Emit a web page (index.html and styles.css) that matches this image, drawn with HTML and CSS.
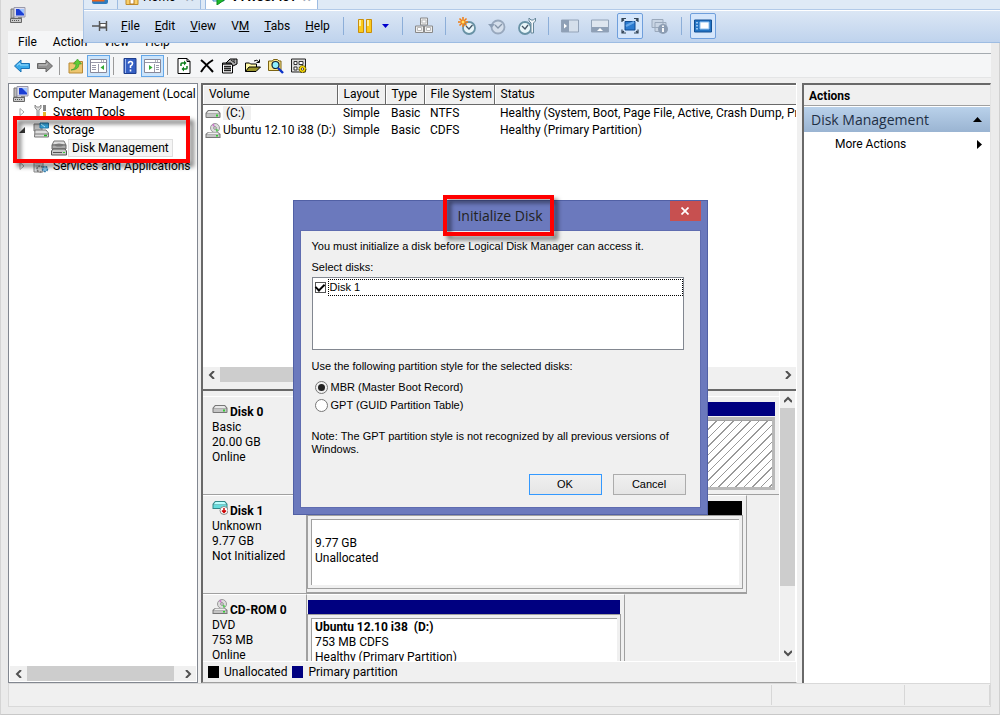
FILE: index.html
```html
<!DOCTYPE html>
<html lang="en">
<head>
    <meta charset="UTF-8">
    <meta name="viewport" content="width=device-width, initial-scale=1.0">
    <title>Computer Management</title>
    <link rel="stylesheet" href="styles.css">
</head>
<body>
    <!-- shared icons -->
    <svg class="defs" width="0" height="0" aria-hidden="true">
        <symbol id="drive" viewBox="0 0 16 16">
            <path d="M3 4h10l2.500 3v4q0 1-1 1h-13q-1 0-1-1V7z" fill="#777"/>
            <path d="M3.500 5h9l2 2.500h-13z" fill="#e8e8e8"/>
            <path d="M1.500 8h13v3h-13z" fill="#c4c4c4"/>
            <path d="M11 8.500h2v2h-2z" fill="#3c3"/>
        </symbol>
        <symbol id="cdrom" viewBox="0 0 16 16">
            <circle cx="10" cy="5" r="4.500" fill="#ddd" stroke="#999"/>
            <path d="M10 5L7 2l2-1.500z" fill="#c7c"/>
            <path d="M10 5l3.500 2-2 2z" fill="#5c5"/>
            <circle cx="10" cy="5" r="1.300" fill="#fff" stroke="#888"/>
            <path d="M3 9h10l2.500 2v4h-15v-4z" fill="#777"/>
            <path d="M3.500 9.500h9l2 2h-13z" fill="#eee"/>
            <path d="M1.500 12h13v2h-13z" fill="#c4c4c4"/>
            <path d="M11 12h2v1.500h-2z" fill="#3c3"/>
        </symbol>
        <symbol id="computer" viewBox="0 0 16 16">
            <path d="M1 2h3v9H1z" fill="#bbb" stroke="#777"/>
            <path d="M4 .5h11v9.500H4z" fill="#dde" stroke="#99a"/>
            <path d="M6 2h8v6.500H6z" fill="#1c3fd4"/>
            <path d="M9 2h5v5z" fill="#9fc4ff"/>
            <path d="M8 10h4v2H8z" fill="#888"/>
            <path d="M.5 11.500h11v4H.5z" fill="#c8c8c8" stroke="#666"/>
            <path d="M2 13.500h8" stroke="#555" stroke-dasharray="1 1"/>
        </symbol>
        <symbol id="left" viewBox="0 0 8 8"><path d="M6 0L2 4l4 4" fill="none" stroke="#505050" stroke-width="2"/></symbol>
        <symbol id="right" viewBox="0 0 8 8"><path d="M2 0l4 4-4 4" fill="none" stroke="#505050" stroke-width="2"/></symbol>
        <symbol id="up" viewBox="0 0 8 8"><path d="M0 6l4-4 4 4" fill="none" stroke="#505050" stroke-width="2"/></symbol>
        <symbol id="down" viewBox="0 0 8 8"><path d="M0 2l4 4 4-4" fill="none" stroke="#505050" stroke-width="2"/></symbol>
    </svg>

    <div class="window">
        <div class="titlebar"><svg class="icon"><use href="#computer"/></svg></div>

        <nav class="menubar">
            <a href="#">File</a><a href="#">Action</a><a href="#">View</a><a href="#">Help</a>
        </nav>

        <div class="toolbar">
            <button aria-label="Back"><svg class="icon" viewBox="0 0 16 16"><path d="M.5 8L7 2v3.500h8.500v5H7V14z" fill="#39a9ea" stroke="#1871b5"/><path d="M3 7.500L6 5v2h8" fill="none" stroke="#9bdcfb"/></svg></button>
            <button aria-label="Forward"><svg class="icon" viewBox="0 0 16 16"><path d="M15.500 8L9 2v3.500H.5v5H9V14z" fill="#919191" stroke="#666"/><path d="M2 7h8V5" fill="none" stroke="#c4c4c4"/></svg></button>
            <span class="sep"></span>
            <button aria-label="Up one level"><svg class="icon" viewBox="0 0 16 16"><path d="M1 5h5l1-1.500h7.500V15H1z" fill="#edc670" stroke="#b98a35"/><path d="M3 12q5-1 5-6H5.500L9.500 1l4 5H11q0 6-8 6z" fill="#5ecb37" stroke="#35962a" stroke-width=".6"/></svg></button>
            <button class="on" aria-label="Show console tree"><svg class="panel-icon" viewBox="0 0 17 14"><path d="M.5.5h16v13H.5z" fill="#fff" stroke="#889"/><path d="M1 3.500h15M8.500 5v8M2 6.500h4M2 8.500h4M2 10.500h4" stroke="#99a"/><path d="M14 6v5l-3.500-2.500z" fill="#3a3"/><path d="M11 2h4" stroke="#667" stroke-dasharray="1 1"/></svg></button>
            <span class="sep"></span>
            <button aria-label="Help"><svg class="icon" viewBox="0 0 16 16"><path d="M2 .5h12v15H2z" fill="#345fc3" stroke="#1d3d8d"/><path d="M3.500 1v14" stroke="#9db7ee"/><path d="M6.500 5.500q0-2 2-2t2 2q0 1.500-2 2.500v2M8.500 11.500v2" fill="none" stroke="#fff" stroke-width="1.600"/></svg></button>
            <button class="on" aria-label="Show action pane"><svg class="panel-icon" viewBox="0 0 17 14"><path d="M.5.5h16v13H.5z" fill="#fff" stroke="#889"/><path d="M1 3.500h15M10.500 5v8M12 6.500h3M12 8.500h3M12 10.500h3" stroke="#99a"/><path d="M5 6v5l3.500-2.500z" fill="#3a3"/><path d="M11 2h4" stroke="#667" stroke-dasharray="1 1"/></svg></button>
            <span class="sep"></span>
            <button aria-label="Refresh"><svg class="icon" viewBox="0 0 16 16"><path d="M2 .5h9l3 3v12H2z" fill="#fff" stroke="#000"/><path d="M11 .5v3h3" fill="none" stroke="#000"/><path d="M5 8V6q0-1 1-1h3M11 8v2q0 1-1 1H7" fill="none" stroke="#0a7d1a" stroke-width="1.500"/><path d="M8 2.500L10.500 5 8 7.500zM8 8.500L5.500 11 8 13.500z" fill="#0a7d1a"/></svg></button>
            <button aria-label="Delete"><svg class="icon" viewBox="0 0 16 16"><path d="M2 2q5 4 12 12M14 2Q7 6 2 14" fill="none" stroke="#000" stroke-width="2"/></svg></button>
            <button aria-label="Properties"><svg class="icon" viewBox="0 0 16 16"><path d="M.5 5h10v10H.5z" fill="#fff" stroke="#000"/><path d="M1 6h9M2 8.500h7M2 10.500h7M2 12.500h7" stroke="#222" stroke-width="1.300"/><path d="M4 5l4-4h7v5l-4 2-2-3z" fill="#aaa" stroke="#000"/><path d="M9 2l4 3M12 1v3" stroke="#222"/></svg></button>
            <button aria-label="Open"><svg class="icon" viewBox="0 0 16 16"><path d="M.5 13.500V5h4l1 1h6v3" fill="#fff9a8" stroke="#000"/><path d="M.5 13.500L4 9h11.500L11 13.500z" fill="#98932a" stroke="#000"/><path d="M9 3q3-2 5 1M14.500 1.500v3h-3" fill="none" stroke="#000"/></svg></button>
            <button aria-label="Rescan"><svg class="icon" viewBox="0 0 16 16"><path d="M.5 12.500V3h4l1-1.500h4L11 3h2v9.500z" fill="#fbe58a" stroke="#7c6412"/><circle cx="7.500" cy="7" r="3.500" fill="#8eefff" stroke="#123" stroke-width="1.200"/><path d="M10 10l5 5" stroke="#0932c8" stroke-width="2.400"/></svg></button>
            <button aria-label="Settings"><svg class="icon" viewBox="0 0 16 16"><path d="M.5 1h14v13H.5z" fill="#ddd" stroke="#222"/><path d="M3 3.500h3v3H3zM8 3.500h4v3H8zM3 9h3v3H3z" fill="#fff" stroke="#333"/><circle cx="11.500" cy="11" r="3.500" fill="#f5d800" stroke="#3c3500" stroke-dasharray="2 1"/><circle cx="11.500" cy="11" r="1.200" fill="#fff" stroke="#543"/></svg></button>
        </div>

        <main class="panes">
            <section class="tree-pane">
                <ul class="tree">
                    <li><svg class="icon"><use href="#computer"/></svg><span>Computer Management (Local</span></li>
                    <li class="child"><svg class="twist" viewBox="0 0 8 8"><path d="M2 .5v7L6 4z" fill="#fff" stroke="#a6a6a6"/></svg><svg class="icon" viewBox="0 0 16 16"><path d="M2 1v3l2 2v9h2V6l2-2V1L6.500 3h-3z" fill="#ddd" stroke="#777" stroke-width=".8"/><path d="M10 1h3v6h-3z" fill="#888"/><path d="M10 8h3v7h-3z" fill="#e9b52d"/></svg><span>System Tools</span></li>
                    <li class="child"><svg class="twist" viewBox="0 0 8 8"><path d="M7 1v6H1z" fill="#333"/></svg><svg class="icon" viewBox="0 0 16 16"><path d="M1 2h8v7H1z" fill="#bbb" stroke="#777"/><path d="M7 1h8.500v5H7z" fill="#37a8e0" stroke="#2676a5"/><path d="M8 2l4 3" stroke="#bdefff"/><path d="M2 8h11l2.500 3v4h-14z" fill="#ddd" stroke="#777"/><path d="M2 12h13" stroke="#777"/><path d="M11 13.500h3" stroke="#2b2" stroke-width="1.500"/></svg><span>Storage</span></li>
                    <li class="grandchild"><svg class="icon" viewBox="0 0 16 16"><path d="M3 1h10l2 4H1z" fill="#ddd" stroke="#777"/><path d="M1 5h14v4H1z" fill="#aaa" stroke="#666"/><ellipse cx="8" cy="5" rx="4" ry="1.500" fill="#777"/><path d="M2 9h12l1.500 2v4H.5v-4z" fill="#c8c8c8" stroke="#555"/><path d="M2 12.500h9" stroke="#555"/><path d="M12 12.500h2" stroke="#3c3"/></svg><span class="selected">Disk Management</span></li>
                    <li class="child"><svg class="twist" viewBox="0 0 8 8"><path d="M2 .5v7L6 4z" fill="#fff" stroke="#a6a6a6"/></svg><svg class="icon" viewBox="0 0 16 16"><path d="M1 2h9v12H1z" fill="#d9dde0" stroke="#888"/><path d="M2.500 5h6M2.500 8h4" stroke="#999"/><circle cx="7" cy="11" r="3" fill="#ccc" stroke="#777" stroke-width="1.500" stroke-dasharray="2 1"/><circle cx="12" cy="11" r="2.500" fill="#8cc5e8" stroke="#3981ad" stroke-width="1.500" stroke-dasharray="2 1"/></svg><span>Services and Applications</span></li>
                </ul>
                <div class="hscroll">
                    <button aria-label="Scroll left"><svg><use href="#left"/></svg></button>
                    <span class="thumb"></span>
                    <button aria-label="Scroll right"><svg><use href="#right"/></svg></button>
                </div>
                <div class="callout storage-callout"></div>
            </section>

            <section class="center">
                <div class="volumes">
                    <div class="volume-list">
                        <table>
                            <colgroup><col class="c-volume"><col class="c-layout"><col class="c-type"><col class="c-fs"><col></colgroup>
                            <thead>
                                <tr><th>Volume</th><th>Layout</th><th>Type</th><th>File System</th><th>Status</th></tr>
                            </thead>
                            <tbody>
                                <tr><td class="vol"><svg class="icon"><use href="#drive"/></svg><span class="picked">(C:)</span></td><td>Simple</td><td>Basic</td><td>NTFS</td><td>Healthy (System, Boot, Page File, Active, Crash Dump, Pri</td></tr>
                                <tr><td class="vol"><svg class="icon"><use href="#cdrom"/></svg><span>Ubuntu 12.10 i38 (D:)</span></td><td>Simple</td><td>Basic</td><td>CDFS</td><td>Healthy (Primary Partition)</td></tr>
                            </tbody>
                        </table>
                    </div>
                    <div class="hscroll">
                        <button aria-label="Scroll left"><svg><use href="#left"/></svg></button>
                        <span class="thumb"></span>
                        <button aria-label="Scroll right"><svg><use href="#right"/></svg></button>
                    </div>
                </div>

                <div class="disks">
                    <div class="disk-list">
                        <div class="disk">
                            <div class="disk-label"><svg class="icon"><use href="#drive"/></svg><b>Disk 0</b><p>Basic<br>20.00 GB<br>Online</p></div>
                            <div class="disk-map full picked-part">
                                <div class="bar primary"></div>
                                <div class="part hatch"></div>
                            </div>
                        </div>
                        <div class="disk">
                            <div class="disk-label"><svg class="icon" viewBox="0 0 16 16"><path d="M3 1h10l2.500 3v5h-15V4z" fill="#388" /><path d="M3.500 2h9l2 2.500h-13z" fill="#bff"/><path d="M1.500 5h13v3h-13z" fill="#6dd"/><circle cx="12" cy="10.500" r="4" fill="#fff" stroke="#888"/><path d="M12 8v5M10 10.500l2 2 2-2" fill="none" stroke="#c00" stroke-width="1.500"/></svg><b>Disk 1</b><p>Unknown<br>9.77 GB<br>Not Initialized</p></div>
                            <div class="disk-map wide">
                                <div class="bar unallocated"></div>
                                <div class="part"><p class="middle">9.77 GB<br>Unallocated</p></div>
                            </div>
                        </div>
                        <div class="disk">
                            <div class="disk-label"><svg class="icon"><use href="#cdrom"/></svg><b>CD-ROM 0</b><p>DVD<br>753 MB<br>Online</p></div>
                            <div class="disk-map short">
                                <div class="bar primary"></div>
                                <div class="part"><p><b>Ubuntu 12.10 i38&nbsp; (D:)</b><br>753 MB CDFS<br>Healthy (Primary Partition)</p></div>
                            </div>
                        </div>
                    </div>
                    <div class="vscroll">
                        <button aria-label="Scroll up"><svg><use href="#up"/></svg></button>
                        <span class="thumb"></span>
                        <button aria-label="Scroll down"><svg><use href="#down"/></svg></button>
                    </div>
                </div>

                <div class="legend">
                    <span class="swatch unallocated"></span><span>Unallocated</span>
                    <span class="swatch primary"></span><span>Primary partition</span>
                </div>
            </section>

            <aside class="actions">
                <h2>Actions</h2>
                <div class="actions-head"><span>Disk Management</span><svg width="9" height="5" viewBox="0 0 9 5"><path d="M0 5l4.500-5L9 5z"/></svg></div>
                <a class="more" href="#"><span>More Actions</span><svg width="5" height="9" viewBox="0 0 5 9"><path d="M0 0l5 4.500L0 9z"/></svg></a>
            </aside>
        </main>

        <footer class="statusbar"><span></span><span></span><span></span></footer>
    </div>

    <!-- virtual machine full screen bar -->
    <header class="vm-bar">
        <div class="vm-tabs">
            <svg class="vm-logo" viewBox="0 0 18 18"><path d="M1 1h12v12H1z" fill="#f08a24"/><path d="M5 5h12v10q0 2-2 2H3q-2 0-2-2v-2h4z" fill="#2d7cc0"/><path d="M1 13h11V5" fill="none" stroke="#e8641b" stroke-width="3"/></svg>
            <div class="vm-tab home"><svg class="icon" viewBox="0 0 16 16"><path d="M2 5h12v10.500H2z" fill="#f8cf6a" stroke="#c08b28"/><path d="M6 9h4v6H6z" fill="#fff" stroke="#b87d25"/></svg><span>Home</span><i>×</i></div>
            <div class="vm-tab current"><svg class="icon" viewBox="0 0 16 16"><path d="M1 3h11v9H1z" fill="#cfe7fb" stroke="#4a8cc4"/><path d="M5 2v14l10-7z" fill="#1fbb2d" stroke="#0d8b1a"/></svg><span>VTW8SPI01</span><i>×</i></div>
        </div>
        <div class="vm-tools">
            <svg class="pin" viewBox="0 0 16 10"><path d="M0 5h7M7.500 0v10M14.500 0v10" stroke="#555" stroke-width="1.400"/><path d="M8 2.500h6v4H8z" fill="#fff" stroke="#555"/><path d="M8 6.500h6" stroke="#555" stroke-width="2"/></svg>
            <nav class="vm-menu">
                <a href="#"><u>F</u>ile</a><a href="#"><u>E</u>dit</a><a href="#"><u>V</u>iew</a><a href="#">V<u>M</u></a><a href="#"><u>T</u>abs</a><a href="#"><u>H</u>elp</a>
            </nav>
            <span class="vm-sep"></span>
            <button class="pause" aria-label="Suspend"><svg width="15" height="15" viewBox="0 0 15 15"><path d="M.5.5h5v13h-5zM8.500.5h5v13h-5z" fill="#fccb1b" stroke="#c98e0a"/><path d="M2 1v6M10 1v6" stroke="#fff0a0" stroke-width="2"/></svg><svg width="7" height="4" viewBox="0 0 7 4"><path d="M0 0h7L3.500 4z" fill="#00c"/></svg></button>
            <span class="vm-sep"></span>
            <button aria-label="Send Ctrl+Alt+Del"><svg class="tool-icon" viewBox="0 0 18 18"><g fill="#eee" stroke="#888"><path d="M5.500 1h7v7h-7zM.5 9h8v6.500h-8zM9.500 9h8v6.500h-8z"/></g><path d="M7 3h4v3H7zM2.500 10.500h4v3h-4zM11.500 10.500h4v3h-4z" fill="#fff" stroke="#bbb"/></svg></button>
            <span class="vm-sep"></span>
            <button aria-label="Take snapshot"><svg class="tool-icon" viewBox="0 0 18 18"><circle cx="11" cy="11" r="6" fill="#e9f6fa" stroke="#6892a5" stroke-width="1.800"/><path d="M8 9l3 3 3.500-4" fill="none" stroke="#456" stroke-width="1.300"/><path d="M5 0v10M0 5h10M1.500 1.500l7 7M8.500 1.500l-7 7" stroke="#ef7c12" stroke-width="1.500"/><circle cx="5" cy="5" r="1.500" fill="#ffe36a"/></svg></button>
            <button aria-label="Revert snapshot"><svg class="tool-icon" viewBox="0 0 18 18"><circle cx="10" cy="10" r="6.500" fill="#d5dfec" stroke="#98a8bd" stroke-width="1.800"/><path d="M7 8l3 3 4-4" fill="none" stroke="#8494a8" stroke-width="1.300"/><path d="M0 7h7L3.500 11z" fill="#8c9eb5"/></svg></button>
            <button aria-label="Manage snapshots"><svg class="tool-icon" viewBox="0 0 18 18"><circle cx="7" cy="11" r="6" fill="#e9f6fa" stroke="#6892a5" stroke-width="1.800"/><path d="M4 9l3 3 3-4" fill="none" stroke="#456" stroke-width="1.300"/><path d="M11 1v3l2 2v10h2.500V6l2-2V1l-2 2h-2.500z" fill="#f0f5f8" stroke="#66879a"/></svg></button>
            <span class="vm-sep"></span>
            <button aria-label="Show library"><svg class="tool-icon" viewBox="0 0 18 18"><path d="M.5 3h17v12H.5z" fill="#d5dfeb" stroke="#93a3b8"/><path d="M1 3h7v12H1z" fill="#8fa0b6"/><path d="M3 6.500v5L6 9z" fill="#fff"/></svg></button>
            <button aria-label="Show thumbnails"><svg class="tool-icon" viewBox="0 0 18 18"><path d="M.5 3h17v12H.5z" fill="#dfe6ef" stroke="#93a3b8"/><path d="M1 10h16v5H1z" fill="#8fa0b6"/><path d="M6 14h6l-3-3z" fill="#fff"/></svg></button>
            <button class="on" aria-label="Full screen"><svg class="tool-icon" viewBox="0 0 18 18"><path d="M4 4.500h10v8.500H4z" fill="#2b7bd0" stroke="#124d92"/><path d="M5 9l8-4" stroke="#69a9ea" stroke-width="2"/><path d="M1 5V1.500h4M13 1.500h4V5M1 12.500V16h4M13 16h4v-3.500M1 1.500l2 2M17 1.500l-2 2M1 16l2-2M17 16l-2-2" fill="none" stroke="#345" stroke-width="1.200"/></svg></button>
            <button aria-label="Unity"><svg class="tool-icon" viewBox="0 0 18 18"><path d="M1 2.500h11v8H1zM4 5.500h11v9H4z" fill="#c9d5e4" stroke="#9aa9bc"/><circle cx="12" cy="12" r="5" fill="#8c9db3"/><path d="M12 8.500v1.500M12 11v4" stroke="#fff" stroke-width="1.800"/></svg></button>
            <span class="vm-sep"></span>
            <button class="on" aria-label="Console view"><svg class="tool-icon" viewBox="0 0 18 18"><path d="M.5 3h17v12H.5z" fill="#2273c3" stroke="#124f92"/><path d="M6 5h9v7H6z" fill="#fff" stroke="#8fc1f0"/><path d="M3 5v1.500M3 8v1.500M3 11v1.500" stroke="#bfe0ff" stroke-width="1.500"/></svg></button>
        </div>
    </header>

    <form class="dialog">
        <div class="dialog-title">
            <h1>Initialize Disk</h1>
            <button type="button" class="close" aria-label="Close"><svg width="8" height="8" viewBox="0 0 8 8"><path d="M.5.5l7 7M7.500.5l-7 7" stroke="#fff" stroke-width="1.700"/></svg></button>
            <div class="callout title-callout"></div>
        </div>
        <div class="dialog-body">
            <p>You must initialize a disk before Logical Disk Manager can access it.</p>
            <p class="list-title">Select disks:</p>
            <div class="disk-box">
                <div class="check-row"><input type="checkbox" id="disk1" checked><label for="disk1">Disk 1</label></div>
            </div>
            <p class="style-title">Use the following partition style for the selected disks:</p>
            <div class="radio-row"><input type="radio" name="style" id="mbr" checked><label for="mbr">MBR (Master Boot Record)</label></div>
            <div class="radio-row"><input type="radio" name="style" id="gpt"><label for="gpt">GPT (GUID Partition Table)</label></div>
            <p class="note">Note: The GPT partition style is not recognized by all previous versions of Windows.</p>
            <div class="buttons">
                <button type="button" class="ok">OK</button>
                <button type="button">Cancel</button>
            </div>
        </div>
    </form>
</body>
</html>
```
FILE: styles.css
```css
* {
    box-sizing: border-box;
}
body {
    margin: 0;
    background-color: #ebebeb;
    font-family: Roboto, "Open Sans", sans-serif;
    font-size: 12px;
    line-height: 15px;
    color: #000;
    position: relative;
    overflow: hidden;
}
a {
    color: inherit;
    text-decoration: none;
}
p, h1, h2, ul {
    margin: 0;
    padding: 0;
    font-weight: normal;
}
button {
    font: inherit;
    border: none;
    background: none;
    padding: 0;
    display: flex;
    align-items: center;
    justify-content: center;
}
.defs {
    position: absolute;
}
.icon {
    width: 16px;
    height: 16px;
    flex: none;
}

/* main window */
.window {
    height: 100vh;
    display: flex;
    flex-direction: column;
    padding: 0 8px 7px 7px;
    border-left: 1px solid #d4d4d4;
    border-right: 1px solid #d0d0d0;
    border-bottom: 1px solid #c8c8c8;
}
.titlebar {
    height: 31px;
    flex: none;
    padding: 7px 2px;
}
.menubar {
    height: 22px;
    flex: none;
    display: flex;
    gap: 16px;
    padding: 4px 10px;
    background-color: #f5f6f7;
}
.toolbar {
    height: 25px;
    flex: none;
    display: flex;
    align-items: center;
    padding-left: 2px;
    background-color: #f5f6f7;
    border-top: 1px solid #a5abb0;
    border-bottom: 1px solid #e4e5e6;
}
.toolbar button {
    width: 23px;
    height: 22px;
}
.toolbar .on {
    background-color: #cbe4fb;
    border: 1px solid #64a7e8;
}
.panel-icon {
    width: 17px;
    height: 14px;
}
.sep {
    width: 1px;
    height: 18px;
    margin: 0 4px 0 3px;
    background-color: #9a9a9a;
}
.panes {
    flex: 1;
    min-height: 0;
    display: flex;
    padding-top: 5px;
    background-color: #f0f0f0;
}

/* scrollbars */
.hscroll, .vscroll {
    display: flex;
    flex: none;
    background-color: #f0f0f0;
}
.hscroll {
    height: 15px;
}
.vscroll {
    width: 17px;
    flex-direction: column;
    border-left: 1px solid #fff;
    border-right: 1px solid #fff;
}
.hscroll button {
    width: 17px;
}
.vscroll button {
    height: 17px;
}
.hscroll svg, .vscroll svg {
    width: 8px;
    height: 8px;
}
.thumb {
    background-color: #cdcdcd;
    flex: 1;
}

/* left pane */
.tree-pane {
    position: relative;
    width: 190px;
    margin-right: 3px;
    flex: none;
    display: flex;
    flex-direction: column;
    background-color: #fff;
    border: 1px solid #828790;
    padding: 1px;
}
.tree {
    flex: 1;
    min-height: 0;
    overflow: hidden;
    list-style: none;
    white-space: nowrap;
}
.tree li {
    height: 18px;
    display: flex;
    align-items: center;
    gap: 4px;
    padding-left: 3px;
}
.tree .child {
    padding-left: 8px;
}
.tree .grandchild {
    padding-left: 41px;
}
.twist {
    width: 8px;
    height: 8px;
    margin-right: 3px;
}
.tree .selected {
    background-color: #f5f5f5;
    border: 1px solid #dedede;
    padding: 0 3px;
    margin-left: -3px;
    line-height: 16px;
}
.tree-pane .thumb {
    margin-right: 5px;
}
.callout {
    position: absolute;
    border: 4px solid #f00;
    filter: drop-shadow(4px 4px 2px rgba(0, 0, 0, 0.5));
}
.storage-callout {
    left: 4px;
    top: 32px;
    width: 177px;
    height: 47px;
}

/* middle pane */
.center {
    flex: 1;
    min-width: 0;
    display: flex;
    flex-direction: column;
    border-left: 2px solid #696969;
    border-right: 1px solid #fff;
    border-bottom: 1px solid #a0a0a0;
}
.volumes {
    height: 308px;
    flex: none;
    display: flex;
    flex-direction: column;
    border-top: 2px solid #696969;
    border-bottom: 2px solid #696969;
    padding-bottom: 7px;
    background-color: #f0f0f0;
}
.volume-list {
    flex: 1;
    overflow: hidden;
    background-color: #fff;
}
.volumes .thumb {
    margin-right: 96px;
}
table {
    width: 100%;
    table-layout: fixed;
    border-collapse: collapse;
}
.c-volume { width: 134px; }
.c-layout { width: 48px; }
.c-type { width: 39px; }
.c-fs { width: 70px; }
th, td {
    text-align: left;
    font-weight: normal;
    white-space: nowrap;
    overflow: hidden;
    padding: 1px 0 0 6px;
    height: 17px;
}
th {
    height: 19px;
    background-color: #f0f0f0;
    border-right: 1px solid #696969;
    border-bottom: 1px solid #696969;
    box-shadow: inset 1px 1px #fff;
}
th:last-child {
    border-right: none;
}
.vol {
    padding-left: 2px;
}
.vol svg, .vol span {
    vertical-align: middle;
}
.vol span {
    margin-left: 2px;
}
.vol .picked {
    background-color: #f0f0f0;
    padding: 0 6px 0 3px;
}
.disks {
    flex: 1;
    min-height: 0;
    display: flex;
    overflow: hidden;
    background-color: #f0f0f0;
}
.disk-list {
    flex: 1;
    min-width: 0;
    padding-top: 5px;
}
.disk {
    height: 99px;
    display: flex;
}
.disk-label {
    width: 104px;
    flex: none;
    padding: 4px 9px;
    border-top: 1px solid #fff;
    border-bottom: 1px solid #a0a0a0;
    border-right: 1px solid #a0a0a0;
}
.disk-label svg {
    vertical-align: -1px;
    margin-right: 2px;
}
.disk-map {
    padding: 5px 4px 4px 1px;
    border-top: 1px solid #fff;
    border-right: 1px solid #a0a0a0;
    border-bottom: 2px solid #a0a0a0;
    display: flex;
    flex-direction: column;
}
.full { width: 100%; }
.wide { width: 440px; }
.short { width: 318px; }
.bar {
    height: 14px;
    flex: none;
}
.primary {
    background-color: #000080;
}
.unallocated {
    background-color: #000;
}
.part {
    flex: 1;
    margin-top: 1px;
    padding: 2px 4px;
    background-color: #fff;
    border: 3px solid #f0f0f0;
    outline: 1px solid #a0a0a0;
    box-shadow: inset 1px 1px #a0a0a0;
    white-space: nowrap;
}
.part .middle {
    padding-top: 15px;
}
.picked-part {
    border-right: none;
    border-bottom-width: 1px;
}
.picked-part .part {
    border-color: #b9b9b9;
    outline: none;
}
.hatch {
    background-image: repeating-linear-gradient(135deg, #fff 0, #fff 5px, #999 5px, #999 6px);
}
.vscroll .thumb {
    margin-bottom: 58px;
}
.legend {
    height: 21px;
    flex: none;
    display: flex;
    align-items: center;
    gap: 5px;
    padding-left: 5px;
    border-top: 1px solid #fff;
    background-color: #f0f0f0;
}
.swatch {
    width: 11px;
    height: 12px;
}

/* right pane */
.actions {
    width: 189px;
    margin-left: 5px;
    flex: none;
    background-color: #fff;
    border-top: 2px solid #696969;
    border-left: 2px solid #696969;
    border-right: 1px solid #e3e3e3;
}
.actions h2 {
    height: 21px;
    padding: 4px 5px;
    font-size: 12px;
    line-height: 15px;
    font-weight: bold;
    background-color: #f0f0f0;
    border-bottom: 1px solid #a0a0a0;
}
.actions-head {
    display: flex;
    justify-content: space-between;
    align-items: center;
    height: 25px;
    margin-top: 1px;
    padding: 0 8px 0 7px;
    font-family: "Open Sans", sans-serif;
    font-size: 14px;
    color: #1e2f45;
    background-image: linear-gradient(#b9d1ea, #9ab4d2);
}
.more {
    display: flex;
    justify-content: space-between;
    align-items: center;
    height: 24px;
    padding: 0 8px 0 31px;
}
.statusbar {
    height: 24px;
    flex: none;
    display: flex;
    border: 1px solid #d9d9d9;
    background-color: #f0f0f0;
    padding: 1px 0;
}
.statusbar span {
    width: 85px;
    border-right: 1px solid #d7d7d7;
}
.statusbar span:first-child {
    flex: 1;
}
.statusbar span:nth-child(2) {
    width: 133px;
}

/* virtual machine bar */
.vm-bar {
    position: absolute;
    top: 0;
    left: 83px;
    right: 0;
    height: 43px;
    border-left: 1px solid #a9c3e4;
    border-bottom: 1px solid #9dbce2;
    background-color: #dfeaf6;
}
.vm-tabs {
    height: 9px;
    display: flex;
    align-items: flex-end;
    overflow: hidden;
    padding-left: 7px;
}
.vm-logo {
    width: 18px;
    height: 18px;
    margin-bottom: 4px;
}
.vm-tab {
    display: flex;
    align-items: center;
    gap: 3px;
    height: 24px;
    padding: 0 6px 0 6px;
    background-color: #dce8f5;
    border-left: 1px solid #9dbce2;
    border-right: 1px solid #9dbce2;
}
.home {
    width: 84px;
    margin-left: 8px;
}
.vm-tab i {
    font-style: normal;
    font-size: 16px;
    color: #99a5b5;
    margin-left: auto;
}
.current {
    width: 113px;
    margin-left: 4px;
    background-color: #fff;
    font-weight: bold;
}
.vm-tools {
    height: 33px;
    display: flex;
    align-items: center;
    gap: 4px;
    padding-left: 8px;
    border-top: 1px solid #b2cae8;
    box-shadow: inset 0 1px #fff;
    background-image: linear-gradient(#dce7f5, #bfd3ed);
}
.pin {
    width: 16px;
    height: 10px;
}
.vm-menu {
    display: flex;
    gap: 15px;
    width: 223px;
    padding-left: 9px;
}
.vm-sep {
    width: 1px;
    height: 18px;
    margin: 0 4px;
    background-color: #8caed8;
}
.vm-tools button {
    width: 26px;
    height: 26px;
}
.vm-tools .pause {
    width: 42px;
    gap: 9px;
}
.vm-tools .on {
    border: 1px solid #6f9fdc;
    border-radius: 2px;
    background-color: #d5e6fb;
}
.tool-icon {
    width: 18px;
    height: 18px;
    flex: none;
}

/* initialize disk dialog */
.dialog {
    position: absolute;
    top: 200px;
    left: 0;
    right: 0;
    width: 415px;
    margin: 0 auto;
    padding: 0 6px 6px 6px;
    border: 1px solid #5160a5;
    background-color: #6b79bd;
    font-family: "Liberation Sans", Arial, sans-serif;
    font-size: 11px;
    line-height: 13px;
}
.dialog-title {
    position: relative;
    height: 29px;
}
.dialog-title h1 {
    font-family: "Open Sans", sans-serif;
    font-size: 14px;
    line-height: 29px;
    text-align: center;
    color: #222;
}
.close {
    position: absolute;
    top: 0;
    right: 0;
    width: 31px;
    height: 20px;
    background-color: #c75050;
}
.title-callout {
    left: 143px;
    top: -6px;
    width: 111px;
    height: 41px;
}
.dialog-body {
    padding: 9px 16px 12px 11px;
    background-color: #f0f0f0;
    border: 1px solid #5f6cb0;
}
.list-title {
    margin: 8px 0 3px 0;
}
.disk-box {
    height: 73px;
    border: 1px solid #828790;
    background-color: #fff;
}
.check-row {
    display: flex;
    align-items: center;
    gap: 2px;
    height: 18px;
    padding: 0 0 0 2px;
}
.check-row label {
    flex: 1;
    height: 17px;
    line-height: 15px;
    padding-left: 1px;
    border: 1px dotted #000;
}
input {
    appearance: none;
    margin: 0;
    flex: none;
    background-color: #fff;
    border: 1px solid #555;
}
input[type=checkbox] {
    width: 11px;
    height: 11px;
    display: flex;
    align-items: center;
    justify-content: center;
}
input[type=checkbox]:checked::after {
    content: "";
    width: 4px;
    height: 7px;
    margin-bottom: 2px;
    border: solid #000;
    border-width: 0 2px 2px 0;
    transform: rotate(45deg);
}
input[type=radio] {
    width: 13px;
    height: 13px;
    border-radius: 50%;
    border-color: #777;
    padding: 2px;
}
input[type=radio]:checked {
    background-color: #222;
    background-clip: content-box;
}
.style-title {
    margin: 10px 0 5px 0;
}
.radio-row {
    display: flex;
    align-items: center;
    gap: 3px;
    height: 18px;
    padding-left: 3px;
}
.note {
    margin-top: 16px;
}
.buttons {
    display: flex;
    justify-content: flex-end;
    gap: 11px;
    margin-top: 18px;
    margin-right: -2px;
}
.buttons button {
    width: 73px;
    height: 21px;
    border: 1px solid #acacac;
    background-image: linear-gradient(#f0f0f0, #e5e5e5);
}
.buttons .ok {
    border-color: #3399ff;
}
```
